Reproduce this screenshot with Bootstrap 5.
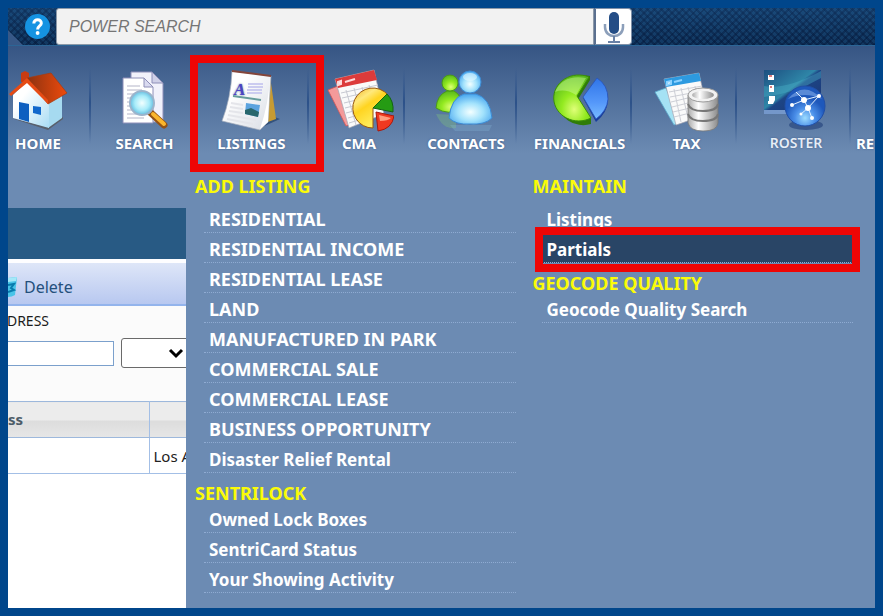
<!DOCTYPE html>
<html lang="en">
<head>
<meta charset="utf-8">
<meta name="viewport" content="width=device-width, initial-scale=1">
<title>Listings menu</title>
<link href="https://cdn.jsdelivr.net/npm/bootstrap@5.3.0/dist/css/bootstrap.min.css" rel="stylesheet">
<style>
body{background:#00468b;font-family:"Noto Sans","Open Sans",sans-serif;font-size:15px;line-height:20px}
.shell{background:#6c8bb3}
.weave{background-color:#174673;background-image:linear-gradient(rgba(30,80,135,.35),rgba(0,10,40,.25)),repeating-linear-gradient(45deg,rgba(4,24,58,.45) 0 2px,transparent 2px 5px),repeating-linear-gradient(-45deg,rgba(4,24,58,.45) 0 2px,transparent 2px 5px)}
.topbar{height:38px;border-bottom:1px solid #2c6596;background-color:#123963}
.help-slot{flex:48 1 0;clip-path:polygon(0 0,100% 0,100% 100%,15px 100%,0 22px)}
.help-wrap{background:#375887;flex:48 1 0}
.help-btn{width:25px;height:25px;margin-left:13px}
.search-slot{flex:538 1 0}
.search-slot input{background:#f2f2f2;border:1px solid #8d99a8;border-radius:3px 0 0 3px;font:italic 16px "Liberation Sans",sans-serif;padding:0 12px;color:#666}
.search-slot input::placeholder{color:#757575}
.mic-btn{flex:35 1 0;background:#fff;border:1px solid #8090a8;border-left:2px solid #5b708f;border-radius:0 4px 4px 0}
.tail{flex:243 1 0}
.mainnav{display:grid;grid-template-columns:83fr 107fr 111fr 96fr 112fr 115fr 105fr 114fr 24fr;height:126px;background:linear-gradient(#365584,#6c8bb3 108px);padding-top:22px}
.navcell{min-width:0;position:relative}
.navcell:not(:last-child)::after{content:"";position:absolute;right:0;top:0;width:2px;height:76px;background:linear-gradient(rgba(32,66,118,0),#2c5189 45%,rgba(44,81,137,0))}
.navcell a{color:#fff;font-weight:700;font-size:15px;line-height:20px;text-shadow:0 0 2px #3c5c8a}
.navcell svg{width:70px;height:64px;display:block;flex:none;margin-bottom:1px}
.first-cell{padding-right:23px}
.shift-cell{padding-left:10px}
.more-cell{overflow:hidden;padding:65px 0 0 5px}
.navcell .thin{font-weight:600;font-size:14px;color:#e6edf6}
.callout{position:absolute;border:8px solid #ee0505;pointer-events:none;z-index:2}
.callout-nav{left:-8px;right:-15px;top:-13px;bottom:0}
.callout-item{left:-7px;right:-7px;top:-6px;bottom:-9px}
.backpage{width:178px;margin-top:36px;background:#fff;color:#222}
.band{height:51px;background:#285a84}
.toolrow{height:47px;border-top:4px solid #fdfdff;border-bottom:2px solid #93b4ec;background:linear-gradient(#dee6f8,#b8c8f0);padding-top:6px}
.toolrow button{color:#24507c;font-size:16px;margin-left:6px}
.filters{background:#fbfbfb;height:95px;padding-top:5px}
.cut-label{width:41px;display:flex;justify-content:flex-end;font-size:14px;color:#1c1c1c}
.fieldrow{padding-top:7px}
.fieldrow input{width:106px;height:25px;border:1px solid #7ba0cc;border-left:0;border-radius:0;padding:0 4px}
.fieldrow select{width:74px;height:30px;flex:none;border:1px solid #6a6a6a;border-radius:3px;padding:0;margin-left:7px;background-position:right 10px center;background-size:16px 16px;background-image:url("data:image/svg+xml,%3csvg xmlns='http://www.w3.org/2000/svg' viewBox='0 0 16 16'%3e%3cpath fill='none' stroke='%23000' stroke-width='3' d='m2 5 6 6 6-6'/%3e%3c/svg%3e")}
.grid-table{width:100%;table-layout:fixed;border-collapse:collapse;white-space:nowrap}
.grid-table th,.grid-table td{height:36px;border:1px solid #a3bfe6;border-left:0;border-right:0;padding:0 4px;overflow:hidden}
.grid-table tr>:first-child{border-right:1px solid #a3bfe6}
.grid-table th{background:linear-gradient(#ececec 50%,#dcdcdc 51%,#e6e6e6);color:#4d5c68;border-color:#9db8dc;padding:0 0 2px}
.grid-table .wide{width:141px}
.grid-table .cut-label{width:15px;font-size:15px;color:#4d5c68;overflow:hidden}
.mega{padding:4px 22px 0 9px;min-width:0}
.mega-col{min-width:0}
.mega h2{font-size:18px;line-height:20px;font-weight:700;color:#fbfb08;margin:0;padding:10px 0 0}
.mega h2.lead-head{padding:0 0 7px}
.mega ul{margin:0 0 0 9px}
.mega li{position:relative}
.mega li a{display:block;color:#fff;font-weight:700;font-size:17px;line-height:25px;padding:4px 5px 0;border-bottom:1px dotted #8fabd2;white-space:nowrap}
.mega li a.caps{font-size:18px}
.mega li a.current{background:#294566}
.mega .col-gap{gap:17px}
</style>
</head>
<body class="p-2 vh-100">
<svg width="0" height="0" class="position-absolute" aria-hidden="true"><defs>
<linearGradient id="roof" x1="0" x2="1"><stop offset="0" stop-color="#8c3210"/><stop offset="1" stop-color="#ee4a0c"/></linearGradient>
<linearGradient id="wall" x1="0" y1="0" x2="1" y2="1"><stop offset=".3" stop-color="#fff"/><stop offset="1" stop-color="#a9dcf4"/></linearGradient>
<radialGradient id="lens"><stop offset="0" stop-color="#f2ffff"/><stop offset=".6" stop-color="#a8ecfa"/><stop offset="1" stop-color="#64bde0"/></radialGradient>
<linearGradient id="paper" x1="0" y1="0" x2="1" y2="1"><stop offset=".3" stop-color="#fff"/><stop offset="1" stop-color="#d8dce4"/></linearGradient>
<linearGradient id="gold" x1="0" y1="0" x2=".6" y2="1"><stop offset="0" stop-color="#f0ae20"/><stop offset=".3" stop-color="#ffe97c"/><stop offset=".5" stop-color="#ffd420"/><stop offset="1" stop-color="#fff36a"/></linearGradient>
<radialGradient id="lime" cx=".55" cy=".75" r=".75"><stop offset="0" stop-color="#e0ff78"/><stop offset=".45" stop-color="#93ea20"/><stop offset="1" stop-color="#58b81c"/></radialGradient>
<radialGradient id="sky" cx=".5" cy=".6" r=".6"><stop offset="0" stop-color="#f4ffff"/><stop offset=".5" stop-color="#a2e2fc"/><stop offset="1" stop-color="#48a6ee"/></radialGradient>
<linearGradient id="blue" x1="0" y1="0" x2="0" y2="1"><stop offset="0" stop-color="#2f74e8"/><stop offset=".6" stop-color="#5598fa"/><stop offset="1" stop-color="#78bcff"/></linearGradient>
<linearGradient id="steel"><stop offset="0" stop-color="#aaa"/><stop offset=".35" stop-color="#fff"/><stop offset="1" stop-color="#8c8c8c"/></linearGradient>
<radialGradient id="globe" cx=".5" cy=".8"><stop offset="0" stop-color="#9cdcff"/><stop offset=".5" stop-color="#4a8ee8"/><stop offset="1" stop-color="#1e58bb"/></radialGradient>
<linearGradient id="screen" x1="0" y1="0" x2="1" y2="1"><stop offset="0" stop-color="#1c4f80"/><stop offset=".45" stop-color="#2f86a8"/><stop offset=".5" stop-color="#1d4585"/><stop offset="1" stop-color="#1b3474"/></linearGradient>
</defs></svg>
<div class="shell h-100 d-flex flex-column overflow-hidden">
  <header class="topbar d-flex flex-shrink-0">
    <div class="help-wrap d-flex"><div class="help-slot weave d-flex align-items-center ps-1">
      <button type="button" class="help-btn btn p-0 border-0 d-flex" aria-label="Help"><svg viewBox="0 0 25 25" width="25" height="25"><circle cx="12.500" cy="12.500" r="12.500" fill="#1593e2"/><path d="M8.800 9.500C8.800 4.500 16.500 4.500 16.300 9.300C16.200 12 12.600 12 12.600 15.500" fill="none" stroke="#fff" stroke-width="3"/><circle cx="12.600" cy="19" r="1.900" fill="#fff"/></svg></button>
    </div></div>
    <div class="search-slot d-flex"><input type="search" class="form-control h-100" placeholder="POWER SEARCH" aria-label="Power search"></div>
    <button type="button" class="mic-btn p-0 d-flex align-items-center justify-content-center" aria-label="Voice search"><svg viewBox="0 0 24 34" width="24" height="34"><path d="M3 14v3c0 12 18 12 18 0v-3" fill="none" stroke="#8c9fba" stroke-width="2.500"/><path d="M12 26v5M6 32h12" stroke="#6981a6" stroke-width="2"/><rect x="7" y="2" width="10" height="22" rx="5" fill="#244d86"/></svg></button>
    <div class="tail weave"></div>
  </header>

  <nav class="mainnav flex-shrink-0" aria-label="Main">
    <div class="navcell first-cell"><a href="#" class="d-flex flex-column align-items-center text-decoration-none">
      <svg viewBox="0 0 70 64"><path d="M8 50L45 62L60 51V49L45 59Z" fill="#59606c"/><path d="M18 14V5L22 3L26 5V14Z" fill="#c83c12"/><path d="M45 33L59 24V50L45 60Z" fill="#a6daf0"/><path d="M24 13L46 34V60L10 50V27Z" fill="url(#wall)"/><path d="M24 10L48 5L64 25L45 36Z" fill="url(#roof)" stroke="#a8390f" stroke-width=".7"/><path d="M24 10L6 26L8 28L24 15L45 36V32Z" fill="#e64b14"/><path d="M16 34L26 36V54L16 51Z" fill="#0d5fc0"/><path d="M30 38L38 39V47L30 45Z" fill="#1268cc"/></svg>
      <span>HOME</span></a></div>
    <div class="navcell"><a href="#" class="d-flex flex-column align-items-center text-decoration-none">
      <svg viewBox="0 0 70 64"><path d="M21 4H42L53 15V54H21Z" fill="#f1f1fb" stroke="#8e8fb8"/><path d="M42 4V15H53Z" fill="#cfd0e8" stroke="#8e8fb8"/><path d="M13 10H34L43 19V55H13Z" fill="#fff" stroke="#8e8fb8"/><path d="M34 10V19H43Z" fill="#d9daf0" stroke="#8e8fb8"/><path d="M17 18H30M17 22H32M17 26H38M17 30H38M17 34H38M17 38H38M17 42H38M17 46H38M17 50H34" stroke="#b4b5c8"/><path d="M41 45L54 57" stroke="#945214" stroke-width="7" stroke-linecap="round"/><path d="M43 46L54 56" stroke="#fbb62c" stroke-width="4" stroke-linecap="round"/><circle cx="32" cy="35" r="12" fill="url(#lens)" stroke="#9bb4cc" stroke-width="2"/></svg>
      <span>SEARCH</span></a></div>
    <div class="navcell"><a href="#" class="d-flex flex-column align-items-center text-decoration-none pe-1" aria-current="page">
      <svg viewBox="0 0 70 64"><path d="M43 60L63 51L55 48Z" fill="#33527d"/><path d="M53 8L59 51L48 55Z" fill="#c79b32"/><path d="M15 3L54 8L51 54L43 62L5 53Q14 30 15 3Z" fill="url(#paper)" stroke="#a3acba" stroke-width=".7"/><path d="M53 8L51 54L43 61Q52 35 53 8Z" fill="#fff"/><path d="M15 3L54 8" stroke="#84453a" stroke-width="2"/><text x="17" y="27" font-family="Liberation Serif" font-style="italic" font-weight="700" font-size="17" fill="#4c43c4">A</text><path d="M31 16H46M31 19H46M30 22H45M30 25H45" stroke="#ccccf0" stroke-width="2"/><path d="M16 28L44 32" stroke="#669c9c" stroke-width="2"/><path d="M14 35L26 37M13 39L26 41M12 43L26 45M11 47L39 52M10 51L36 56" stroke="#e4e5ea" stroke-width="2"/><path d="M29 35L43 37L41 49L28 46Z" fill="#5ba3df"/><path d="M28 42L34 40L42 44L41 49L28 46Z" fill="#28666c"/></svg>
      <span>LISTINGS</span></a><div class="callout callout-nav"></div></div>
    <div class="navcell"><a href="#" class="d-flex flex-column align-items-center text-decoration-none ps-1">
      <svg viewBox="0 0 70 64"><path d="M4 22L14 18L28 56L22 58Z" fill="#f49a9a" stroke="#d65353" stroke-width=".8"/><path d="M11 11L50 2L60 46L25 60Z" fill="#fafafa" stroke="#a4a4b0" stroke-width=".7"/><path d="M11 11L50 2L53 12L14 20Z" fill="#dc3b3b"/><path d="M14 14l3-1v3l-3 1ZM21 14L31 11" fill="#fff" stroke="#ffd8d8" stroke-width="2"/><path d="M17 25L54 17M18 30L54 22M20 35L45 29M21 40L45 34M22 45L45 39M24 50L45 44M25 55L45 49M22 22L32 57M30 20L38 50M38 19L45 45M45 17L49 30" stroke="#c7c9d2"/><path d="M49 40V60A20 20 0 1 1 64 27Z" fill="url(#gold)" stroke="#98570d"/><path d="M49 40L63 26Q70 33 69 44Z" fill="#259b13" stroke="#126410"/><path d="M52 44L70 48Q68 61 54 63Z" fill="#ef3920" stroke="#a9180c"/><path d="M55 47L67 50Q64 53 56 53Z" fill="#ff9f80"/></svg>
      <span>CMA</span></a></div>
    <div class="navcell shift-cell"><a href="#" class="d-flex flex-column align-items-center text-decoration-none">
      <svg viewBox="0 0 70 64"><path d="M5 46Q12 62 25 60V47Z" fill="#77b184" opacity=".45"/><path d="M19 57H61L58 63H24Z" fill="#9cd0f0" opacity=".2"/><path d="M5 40Q6 27 16 23H23Q31 27 32 41Q17 48 5 40Z" fill="url(#lime)" stroke="#4b9a18"/><circle cx="19" cy="15" r="8" fill="url(#lime)" stroke="#4b9a18"/><path d="M18 50Q20 30 33 26H45Q59 30 61 50Q54 57 39 56Q25 57 18 50Z" fill="url(#sky)" stroke="#3c8cd6"/><circle cx="39" cy="14" r="11" fill="url(#sky)" stroke="#3c8cd6"/><ellipse cx="39" cy="9" rx="7" ry="4" fill="#e4f8ff" opacity=".6"/></svg>
      <span>CONTACTS</span></a></div>
    <div class="navcell shift-cell"><a href="#" class="d-flex flex-column align-items-center text-decoration-none">
      <svg viewBox="0 0 70 64"><path d="M32 33L45 12V8A26 25 0 1 0 46 56V50Z" fill="#2f7c08"/><path d="M32 28L44 9A25 23 0 1 0 46 50Z" fill="url(#lime)" stroke="#3c8d0b"/><path d="M10 24Q18 6 41 10L31 27Q20 20 10 24Z" fill="#d9ffb0" opacity=".4"/><path d="M38 30L52 12Q63 18 63 33Q62 45 51 54Z" fill="#173d9b"/><path d="M38 29L52 10Q63 17 63 31Q62 43 51 51Z" fill="url(#blue)" stroke="#2853ba" stroke-width=".8"/></svg>
      <span>FINANCIALS</span></a></div>
    <div class="navcell"><a href="#" class="d-flex flex-column align-items-center text-decoration-none ps-1">
      <svg viewBox="0 0 70 64"><path d="M3 24L14 20L28 54L22 57Z" fill="#a5e2f4" stroke="#5ba9cc" stroke-width=".8"/><path d="M12 11L47 5L56 46L24 57Z" fill="#fafafa" stroke="#a4a4b0" stroke-width=".7"/><path d="M12 11L47 5L49 13L14 19Z" fill="#2d9ae0"/><path d="M15 14l4-1v3l-4 1ZM22 14L30 12" fill="#fff" stroke="#8cd2ff" stroke-width="2"/><path d="M17 24L50 18M18 29L50 23M19 34L40 29M20 39L40 34M21 44L38 40M22 49L38 45M22 21L29 54M29 20L36 50M36 19L40 34M43 18L44 24" stroke="#cdcfd6"/><path d="M36 27V55Q38 63 51 63Q65 63 66 55V27Z" fill="url(#steel)" stroke="#777" stroke-width=".8"/><path d="M36 36Q38 43 51 43Q65 43 66 36M36 46Q38 53 51 53Q65 53 66 46" fill="none" stroke="#777" stroke-width="2"/><ellipse cx="51" cy="27" rx="15" ry="7" fill="#f2f2f2" stroke="#999"/><ellipse cx="51" cy="27" rx="11" ry="4" fill="url(#steel)"/></svg>
      <span>TAX</span></a></div>
    <div class="navcell"><a href="#" class="thin d-flex flex-column align-items-center text-decoration-none ps-1">
      <svg viewBox="0 0 70 64"><ellipse cx="45" cy="57" rx="17" ry="5" fill="#203d78" opacity=".6"/><path d="M3 2H60V45H3Z" fill="url(#screen)"/><path d="M3 42H60V46H3Z" fill="#7497ca"/><path d="M3 18Q25 22 60 3V10Q35 25 3 29Z" fill="#4ab2c7" opacity=".4"/><path d="M7 7h6v5h-6ZM8 17h5v7h-5ZM8 28h6v4l-2 4h-5v-3h1Z" fill="#fff"/><path d="M8 8h3M9 19h2" stroke="#d45656" stroke-width="1.500"/><circle cx="44" cy="38" r="20" fill="url(#globe)" stroke="#214fa6"/><path d="M27 31Q43 12 61 31Q44 23 27 31Z" fill="#b3d7ff" opacity=".4"/><path d="M31 37L43 32L58 28M43 32L47 40L40 46M47 40L51 50M43 32L35 24M47 40L57 29" stroke="#e0efff" fill="none"/><circle cx="31" cy="37" r="2" fill="#fff"/><circle cx="43" cy="32" r="3" fill="#fff"/><circle cx="58" cy="28" r="2" fill="#fff"/><circle cx="47" cy="40" r="3" fill="#fff"/><circle cx="51" cy="50" r="2" fill="#fff"/><circle cx="40" cy="46" r="1.500" fill="#fff"/></svg>
      <span>ROSTER</span></a></div>
    <div class="navcell more-cell"><a href="#" class="text-decoration-none">RE</a></div>
  </nav>

  <div class="d-flex flex-grow-1">
    <main class="backpage flex-shrink-0 overflow-hidden">
      <div class="band"></div>
      <div class="toolrow d-flex align-items-center">
        <svg width="10" height="24" viewBox="0 0 10 24"><path d="M0 3L9 2L7 20Q4 22 0 22Z" fill="#49c4e8"/><path d="M0 3L9 2L8 6L0 7Z" fill="#a4e8f8"/><path d="M0 10L6 9L3 13L6 15L0 17" fill="none" stroke="#087cae" stroke-width="2"/></svg>
        <button type="button" class="btn border-0 p-0 lh-sm">Delete</button>
      </div>
      <div class="filters">
        <label for="address" class="cut-label overflow-hidden">ADDRESS</label>
        <div class="fieldrow d-flex align-items-center">
          <input id="address" type="text" class="form-control flex-shrink-0">
          <select class="form-select" aria-label="Filter"><option></option></select>
        </div>
      </div>
      <table class="grid-table">
        <thead><tr><th class="wide" scope="col"><div class="cut-label">Address</div></th><th scope="col" aria-label="City"></th></tr></thead>
        <tbody><tr><td></td><td>Los A</td></tr></tbody>
      </table>
    </main>

    <section class="mega flex-grow-1" aria-label="Listings menu">
      <div class="row g-0 row-cols-2 col-gap flex-nowrap">
        <div class="mega-col col flex-shrink-1">
          <h2 class="lead-head">ADD LISTING</h2>
          <ul class="list-unstyled">
            <li><a href="#" class="caps text-decoration-none">RESIDENTIAL</a></li>
            <li><a href="#" class="caps text-decoration-none">RESIDENTIAL INCOME</a></li>
            <li><a href="#" class="caps text-decoration-none">RESIDENTIAL LEASE</a></li>
            <li><a href="#" class="caps text-decoration-none">LAND</a></li>
            <li><a href="#" class="caps text-decoration-none">MANUFACTURED IN PARK</a></li>
            <li><a href="#" class="caps text-decoration-none">COMMERCIAL SALE</a></li>
            <li><a href="#" class="caps text-decoration-none">COMMERCIAL LEASE</a></li>
            <li><a href="#" class="caps text-decoration-none">BUSINESS OPPORTUNITY</a></li>
            <li><a href="#" class="text-decoration-none">Disaster Relief Rental</a></li>
          </ul>
          <h2>SENTRILOCK</h2>
          <ul class="list-unstyled">
            <li><a href="#" class="text-decoration-none">Owned Lock Boxes</a></li>
            <li><a href="#" class="text-decoration-none">SentriCard Status</a></li>
            <li><a href="#" class="text-decoration-none">Your Showing Activity</a></li>
          </ul>
        </div>
        <div class="mega-col col flex-shrink-1">
          <h2 class="lead-head">MAINTAIN</h2>
          <ul class="list-unstyled">
            <li><a href="#" class="text-decoration-none">Listings</a></li>
            <li><a href="#" class="current text-decoration-none">Partials</a><div class="callout callout-item"></div></li>
          </ul>
          <h2>GEOCODE QUALITY</h2>
          <ul class="list-unstyled">
            <li><a href="#" class="text-decoration-none">Geocode Quality Search</a></li>
          </ul>
        </div>
      </div>
    </section>
  </div>
</div>
<script src="https://cdn.jsdelivr.net/npm/bootstrap@5.3.0/dist/js/bootstrap.bundle.min.js"></script>
</body>
</html>
